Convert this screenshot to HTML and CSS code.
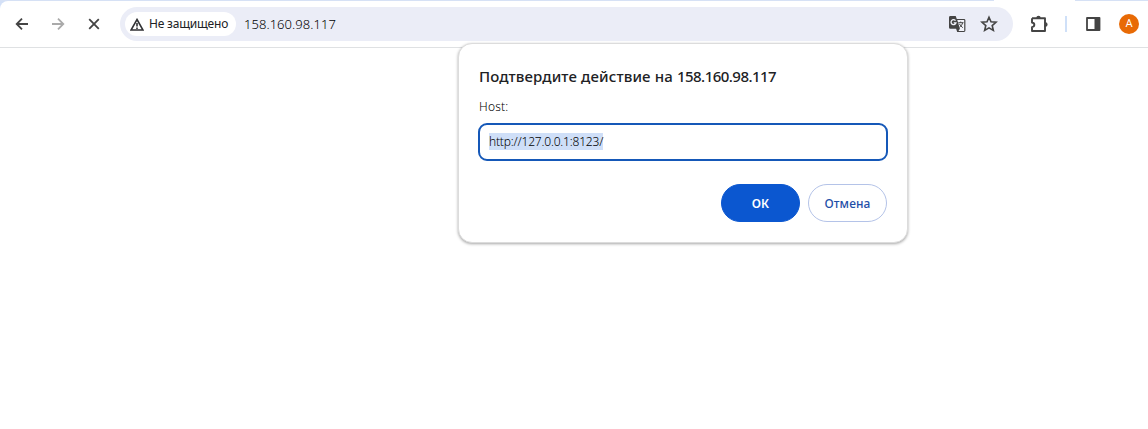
FILE: index.html
```html
<!DOCTYPE html>
<html lang="ru">
<head>
<meta charset="utf-8">
<title>158.160.98.117</title>
<link rel="stylesheet" href="styles.css">
</head>
<body>
<div class="browser">
  <div class="tabstrip"><div class="active-tab"></div></div>
  <header class="toolbar">
    <nav class="nav">
      <svg class="icon" viewBox="0 0 16 16"><path d="M14 8H3M8 2.7 2.7 8 8 13.3"/></svg>
      <svg class="icon disabled" viewBox="0 0 16 16"><path d="M2 8h11M8 2.7 13.3 8 8 13.3"/></svg>
      <svg class="icon" viewBox="0 0 16 16"><path d="m3.2 3.2 9.6 9.6M12.8 3.2l-9.6 9.6"/></svg>
    </nav>
    <div class="omnibox">
      <div class="chip">
        <svg class="warn" viewBox="0 0 14 13"><path d="M7 1.5 13 12H1zM7 5v3.6M7 9.6v1.3"/></svg>
        <span class="chip-text">Не защищено</span>
      </div>
      <span class="url">158.160.98.117</span>
      <svg class="translate" viewBox="0 0 18 18">
        <path class="solid" d="M2.4 1h5.3l1.1 3H16a1.4 1.4 0 0 1 1.4 1.4v10.2A1.4 1.4 0 0 1 16 17H9.2l-1.1-3.2H2.4A1.4 1.4 0 0 1 1 12.400V2.400A1.4 1.4 0 0 1 2.400 1z"/>
        <path class="paper" d="M9.300 5.100H16.200v10.800h-5.700l1.400-2.100z"/>
        <path class="g" d="M7.500 5.600a2.500 2.500 0 1 0 .5 2.200H5.700"/>
        <path class="glyph" d="M10.300 7.700h5.200M12.700 6.600v1.100M14.600 7.800c-.4 1.800-1.500 3.300-3 4.400M11.400 8.800c.7 1.500 1.900 2.800 3.400 3.900"/>
      </svg>
      <svg class="star" viewBox="0 0 18 18"><path d="m9 2.200 2 4.600 5 .45-3.800 3.300 1.150 4.900L9 12.850l-4.350 2.600 1.150-4.900L2 7.250l5-.45z"/></svg>
    </div>
    <svg class="puzzle" viewBox="0 0 20 20"><path d="M3 4.300h13v4.200M16 11.500v5.500H3v-3.900c3.100-.5 3.100-4.100 0-4.600V4.300"/><path class="solid" d="M7.300 4a2.200 2.200 0 0 1 4.400 0zM16.400 8.300a2 2 0 0 1 0 4.400z"/><path d="M16 8v4.500"/></svg>
    <span class="divider"></span>
    <svg class="panel" viewBox="0 0 16 16"><path d="M2 2h12.500v12H2z"/><path class="solid" d="M9.500 2h5v12h-5z"/></svg>
    <span class="avatar">A</span>
  </header>
  <main class="page"></main>
  <section class="dialog">
    <h1 class="title">Подтвердите действие на <span class="host">158.160.98.117</span></h1>
    <div class="label">Host:</div>
    <div class="field"><span class="selected">http://127.0.0.1:8123/</span></div>
    <div class="actions">
      <button class="btn primary"><span class="ok">ОК</span></button>
      <button class="btn"><span class="cancel">Отмена</span></button>
    </div>
  </section>
</div>
</body>
</html>
```
FILE: styles.css
```css
* { box-sizing: border-box; }
body { margin: 0; overflow: hidden; background: #fff; color: #202124; font-family: "Noto Sans", "Open Sans", sans-serif; }
.browser { height: 429px; display: flex; flex-direction: column; position: relative; background: linear-gradient(#d3e0f7 0 12px, #fff 12px); }
.tabstrip { height: 1px; flex: none; background: #d6e1f5; padding-left: 994px; }
.active-tab { width: 81px; height: 1px; background: #fff; }
.toolbar { height: 47px; flex: none; display: flex; align-items: center; background: #fff; border-radius: 8px 0 0 0; border-bottom: 1px solid #dfe1e3; padding: 0 9px 0 14px; }
.nav { display: flex; gap: 20px; width: 106px; }
.icon { width: 16px; height: 16px; fill: none; stroke: #444; stroke-width: 1.8; }
.disabled { stroke: #aaa; }
.omnibox { display: flex; align-items: center; width: 893px; height: 34px; border-radius: 17px; background: #ebedf7; padding: 0 15px 0 5px; }
.chip { display: flex; align-items: center; gap: 5px; width: 111px; height: 24px; border-radius: 12px; background: #fff; padding-left: 5px; }
.warn { width: 14px; height: 13px; fill: none; stroke: #303134; stroke-width: 1.6; }
.chip-text { font-size: 12px; line-height: 20px; letter-spacing: -.2px; white-space: nowrap; }
.url { margin-left: 8px; color: #000; font-size: 13px; font-weight: 300; line-height: 20px; letter-spacing: .05px; flex: 1; }
.translate { width: 18px; height: 18px; margin-right: 14px; }
.solid { fill: #444; stroke: none; }
.paper { fill: #f2f3fa; }
.g { fill: none; stroke: #f2f3fa; stroke-width: 1.3; }
.glyph { fill: none; stroke: #444; stroke-width: 1; }
.star { width: 18px; height: 18px; fill: none; stroke: #444; stroke-width: 1.6; }
.puzzle { width: 20px; height: 20px; margin-left: 16px; fill: none; stroke: #444; stroke-width: 1.9; stroke-linejoin: round; }
.divider { width: 2px; height: 16px; background: #cfe0f8; margin: 0 18px 0 16px; }
.panel { width: 16px; height: 16px; fill: none; stroke: #444; stroke-width: 1.8; stroke-linejoin: round; }
.avatar { width: 20px; height: 20px; border-radius: 50%; background: #e86a05; color: #fff; font: 11px/20px Roboto, sans-serif; text-align: center; margin-left: auto; }
.page { flex: 1; background: #fff; }
.dialog { position: absolute; left: 458px; top: 43px; width: 450px; height: 200px; border: 1px solid #dcdcdc; border-radius: 14px; background: #fff; padding: 20px 19px 20px 19px; box-shadow: 0 1px 3px rgba(0,0,0,.35); }
.title { margin: 0 0 0 1px; font-size: 15px; font-weight: 500; line-height: 24px; letter-spacing: .14px; white-space: nowrap; }
.host { letter-spacing: -.53px; }
.label { margin: 10px 0 0 1px; color: #000; font-size: 12px; font-weight: 300; line-height: 18px; letter-spacing: .2px; }
.field { margin-top: 7px; height: 38px; border: 2px solid #1558b8; border-radius: 9px; padding: 8px 9px; color: #000; font-size: 12px; font-weight: 300; line-height: 18px; }
.selected { display: inline-block; height: 17px; background: #cfdff8; letter-spacing: -.18px; white-space: nowrap; }
.actions { display: flex; justify-content: flex-end; gap: 8px; margin: 23px 1px 0 0; }
.btn { width: 79px; height: 38px; border-radius: 19px; border: 1px solid #b4c3e8; background: #fff; color: #1f4fa8; padding: 2px 0 0; font: 500 12px/18px "Noto Sans", sans-serif; letter-spacing: .1px; white-space: nowrap; }
.primary { border-color: #0b57d0; background: #0b57d0; color: #fff; font-weight: 600; }
```
